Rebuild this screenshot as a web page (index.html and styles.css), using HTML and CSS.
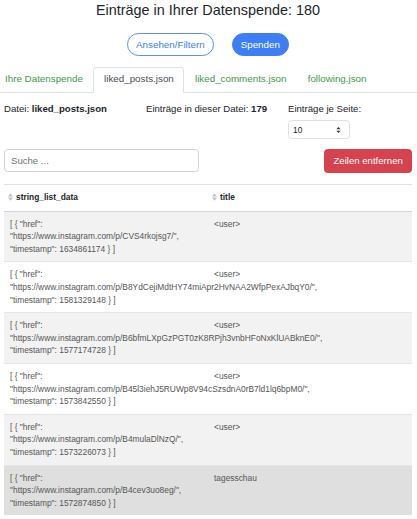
FILE: index.html
```html
<!DOCTYPE html>
<html lang="de">
<head>
<meta charset="utf-8">
<title>Datenspende</title>
<link rel="stylesheet" href="styles.css">
</head>
<body>
<div class="page">
  <h1 class="title">Einträge in Ihrer Datenspende: 180</h1>
  <div class="actions">
    <button class="pill pill-outline">Ansehen/Filtern</button>
    <button class="pill pill-solid">Spenden</button>
  </div>
  <nav class="tabs">
    <a class="tab">Ihre Datenspende</a>
    <a class="tab active">liked_posts.json</a>
    <a class="tab">liked_comments.json</a>
    <a class="tab">following.json</a>
  </nav>
  <div class="info">
    <div>Datei: <b>liked_posts.json</b></div>
    <div>Einträge in dieser Datei: <b>179</b></div>
    <div>
      <div>Einträge je Seite:</div>
      <div class="select-wrap">
        <select class="select"><option>10</option><option>25</option><option>50</option></select>
        <svg class="select-arrow" width="5" height="8" viewBox="0 0 5 8"><path d="M0.4 3.3 L2.5 1 L4.6 3.3 Z M0.4 4.7 L4.6 4.7 L2.5 7 Z" fill="#333"/></svg>
      </div>
    </div>
  </div>
  <div class="toolbar">
    <input class="search" type="text" placeholder="Suche ...">
    <button class="danger">Zeilen entfernen</button>
  </div>
  <table class="data">
    <thead>
      <tr>
        <th><span class="sort"><svg width="5" height="8" viewBox="0 0 5 8"><path d="M0 3.4 L2.5 0.2 L5 3.4 Z M0 4.6 L5 4.6 L2.5 7.8 Z" fill="#c4c4c4"/></svg></span>string_list_data</th>
        <th><span class="sort"><svg width="5" height="8" viewBox="0 0 5 8"><path d="M0 3.4 L2.5 0.2 L5 3.4 Z M0 4.6 L5 4.6 L2.5 7.8 Z" fill="#c4c4c4"/></svg></span>title</th>
      </tr>
    </thead>
    <tbody>
      <tr>
        <td><span class="nw">[ { "href":</span> <span class="nw">"https://www.instagram.com/p/CVS4rkojsg7/",</span> <span class="nw">"timestamp": 1634861174 } ]</span></td>
        <td>&lt;user&gt;</td>
      </tr>
      <tr>
        <td><span class="nw">[ { "href":</span> <span class="nw">"https://www.instagram.com/p/B8YdCejiMdtHY74miApr2HvNAA2WfpPexAJbqY0/",</span> <span class="nw">"timestamp": 1581329148 } ]</span></td>
        <td>&lt;user&gt;</td>
      </tr>
      <tr>
        <td><span class="nw">[ { "href":</span> <span class="nw">"https://www.instagram.com/p/B6bfmLXpGzPGT0zK8RPjh3vnbHFoNxKlUABknE0/",</span> <span class="nw">"timestamp": 1577174728 } ]</span></td>
        <td>&lt;user&gt;</td>
      </tr>
      <tr>
        <td><span class="nw">[ { "href":</span> <span class="nw">"https://www.instagram.com/p/B45l3iehJ5RUWp8V94cSzsdnA0rB7ld1lq6bpM0/",</span> <span class="nw">"timestamp": 1573842550 } ]</span></td>
        <td>&lt;user&gt;</td>
      </tr>
      <tr>
        <td><span class="nw">[ { "href":</span> <span class="nw">"https://www.instagram.com/p/B4mulaDlNzQ/",</span> <span class="nw">"timestamp": 1573226073 } ]</span></td>
        <td>&lt;user&gt;</td>
      </tr>
      <tr class="hover">
        <td><span class="nw">[ { "href":</span> <span class="nw">"https://www.instagram.com/p/B4cev3uo8eg/",</span> <span class="nw">"timestamp": 1572874850 } ]</span></td>
        <td>tagesschau</td>
      </tr>
    </tbody>
  </table>
</div>
</body>
</html>
```

FILE: styles.css
```css
* { box-sizing: border-box; }
html, body { margin: 0; padding: 0; background: #fff; }
body {
  font-family: "Liberation Sans", Arial, Helvetica, sans-serif;
  font-size: 9.6px;
  line-height: 14.4px;
  color: #212529;
  overflow: hidden;
}
.page { padding: 0 5px 0 4px; }

.title {
  margin: 0;
  padding-top: 2px;
  font-size: 14.4px;
  line-height: 17.3px;
  font-weight: 500;
  text-align: center;
  color: #212529;
}

.actions {
  display: flex;
  justify-content: center;
  gap: 18px;
  margin-top: 14px;
}
.pill {
  height: 23px;
  padding: 0 8px;
  border-radius: 12px;
  font-family: inherit;
  font-size: 9.8px;
  line-height: 14.4px;
  border: 1px solid #5b8ff2;
}
.pill-outline { background: #fff; color: #3d7ef5; }
.pill-solid { background: #3d7ef5; border-color: #3d7ef5; color: #fff; }

.tabs {
  display: flex;
  margin: 10.4px -5px 0 -9.6px;
  border-bottom: 1px solid #dee2e6;
}
.tab {
  display: block;
  padding: 4.8px 9.6px;
  border: 1px solid transparent;
  border-radius: 3.6px 3.6px 0 0;
  margin-bottom: -1px;
  color: #3f9a45;
  font-size: 9.8px;
  line-height: 14.4px;
}
.tab.active {
  color: #495057;
  background: #fff;
  border-color: #dee2e6 #dee2e6 #fff;
}

.info {
  display: grid;
  grid-template-columns: 142px 142px 124px;
  margin-top: 9px;
}
.select-wrap {
  position: relative;
  width: 62px;
  margin-top: 4px;
}
.select {
  appearance: none;
  -webkit-appearance: none;
  display: block;
  width: 62px;
  height: 19px;
  padding: 0 4px;
  border: 1px solid #dee2e6;
  border-radius: 3.6px;
  background: #fff;
  font-family: inherit;
  font-size: 8.4px;
  color: #212529;
}
.select-arrow {
  position: absolute;
  right: 9px;
  top: 5.5px;
  pointer-events: none;
}

.toolbar {
  display: flex;
  justify-content: space-between;
  align-items: flex-start;
  margin-top: 9.5px;
}
.search {
  width: 195px;
  height: 23.5px;
  padding: 0 6px;
  border: 1px solid #ced4da;
  border-radius: 3.6px;
  font-family: inherit;
  font-size: 9.6px;
  color: #212529;
}
.search::placeholder { color: #6c757d; }
.danger {
  height: 24px;
  padding: 0 8.2px;
  border: 1px solid #d6434e;
  border-radius: 3.6px;
  background: #d6434e;
  color: #fff;
  font-family: inherit;
  font-size: 9.6px;
}

.data {
  width: 100%;
  margin-top: 11px;
  border-collapse: collapse;
  table-layout: fixed;
  border-top: 1px solid #e3e3e3;
  font-size: 8.4px;
  line-height: 12.6px;
}
.data th {
  text-align: left;
  font-weight: bold;
  color: #212529;
  padding: 6.5px 4px 7px;
  border-bottom: 1px solid #d6d6d6;
}
.sort {
  display: inline-block;
  width: 5px;
  margin-right: 3px;
  vertical-align: -1px;
}
.sort svg { display: block; }
.data td {
  vertical-align: top;
  padding: 6px 6px;
  color: #555;
  border-top: 1px solid #e6e6e6;
}
.nw { white-space: nowrap; }
.data tbody tr:nth-child(odd) td { background: #f2f2f2; }
.data tbody tr.hover td { background: #dfdfdf; }
```
